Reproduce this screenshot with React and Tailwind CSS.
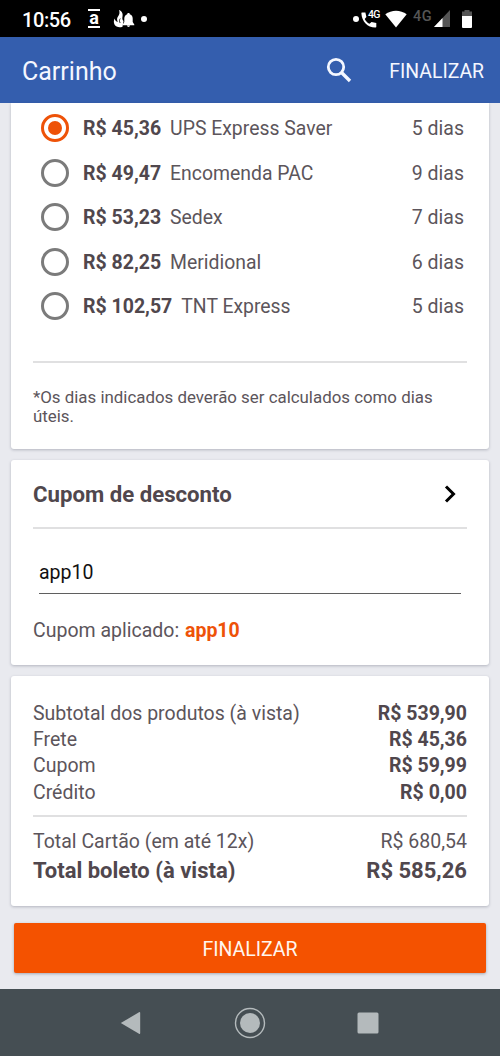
import React from "react";

const shipping = [
  { price: "R$ 45,36", name: "UPS Express Saver", days: "5 dias", selected: true },
  { price: "R$ 49,47", name: "Encomenda PAC", days: "9 dias" },
  { price: "R$ 53,23", name: "Sedex", days: "7 dias" },
  { price: "R$ 82,25", name: "Meridional", days: "6 dias" },
  { price: "R$ 102,57", name: "TNT Express", days: "5 dias" },
];

const totals = [
  ["Subtotal dos produtos (à vista)", "R$ 539,90"],
  ["Frete", "R$ 45,36"],
  ["Cupom", "R$ 59,99"],
  ["Crédito", "R$ 0,00"],
];

function StatusBar() {
  return (
    <header className="flex h-[37px] shrink-0 items-center bg-black pr-[28px] pl-[22px] text-white">
      <span className="w-[50px] pt-[2px] text-[20px] leading-none font-medium tracking-[-0.400px] whitespace-nowrap">10:56</span>
      <div className="ml-[16px] flex h-[19px] w-[12px] flex-col items-center justify-center border-y-2 border-white">
        <span className="pb-px text-[18px] leading-[12px] font-bold">a</span>
      </div>
      <svg className="ml-[13px]" width="22" height="20" viewBox="0 0 22 20" fill="#fff">
        <path d="M6 1C9.500 2.500 10 5 9.500 7.500C9 9.500 9.500 11 10.500 12L9.500 17.800C6 19 3 18 1.500 15.500C0.600 13.500 0.600 11.500 1.700 9.500C2 11.500 3 12.500 4.800 13C3.800 11 3.800 9 5 7.500C6.500 5.500 7 3.500 6 1Z" />
        <path d="M7.300 9.500C6.200 10.800 6.200 12.500 7.200 14" fill="none" stroke="#000" strokeWidth="0.800" />
        <path d="M15.500 4C16.300 4 16.800 4.500 16.800 5.200C19 5.900 19.700 7.500 19.700 9.500V13L21.300 15.500V16.200H9.700V15.500L11.300 13V9.500C11.300 7.500 12.200 5.900 14.200 5.200C14.200 4.500 14.800 4 15.500 4ZM14 16.600H17C17 18.500 14 18.500 14 16.600Z" />
      </svg>
      <span className="ml-[6px] size-[6px] rounded-full bg-white" />
      <div className="ml-auto flex items-center">
        <span className="size-[6px] rounded-full bg-white" />
        <div className="relative ml-[2px] h-[20px] w-[20px]">
          <svg width="17" height="20" viewBox="0 0 17 20" fill="#fff">
            <path d="M1 3.500H4.400L5.400 8L3.700 10C4.800 12.200 6.300 13.700 8.500 14.800L10.500 12.900L15.300 14V17.700C15.300 18.300 14.800 18.500 14.200 18.500C6.500 18.500 0.900 12.500 0.400 4.500C0.300 3.800 0.500 3.500 1 3.500Z" />
          </svg>
          <span className="absolute top-[1px] left-[7px] text-[10.500px] leading-[10px] font-medium tracking-[-0.900px]">4G</span>
        </div>
        <svg className="ml-[4px]" width="22" height="18" viewBox="0 0 22 18" fill="#fff">
          <path d="M0.300 4.300C6.500 -0.600 15.500 -0.600 21.700 4.300L11 17.500Z" />
        </svg>
        <span className="relative top-[-2px] ml-[6px] text-[14.500px] leading-[14px] font-medium tracking-[0.400px] text-[#555]">4G</span>
        <svg className="ml-[2px]" width="16" height="17" viewBox="0 0 16 17">
          <path d="M16 0V17H0Z" fill="#555" />
          <path d="M8.500 8V17H0Z" fill="#fff" />
        </svg>
        <svg className="ml-[12px]" width="10" height="18" viewBox="0 0 10 18">
          <path d="M2.500 0H7.500V1.500H10V6H0V1.500H2.500Z" fill="#555" />
          <path d="M0 6H10V17A1 1 0 0 1 9 18H1A1 1 0 0 1 0 17Z" fill="#fff" />
        </svg>
      </div>
    </header>
  );
}

function AppBar() {
  return (
    <div className="flex h-[66px] shrink-0 items-center bg-[#345eae] pr-[16px] pl-[22px] text-[#f4f7ff]">
      <h1 className="pt-[2px] text-[25px] leading-none">Carrinho</h1>
      <svg className="ml-auto" width="26" height="26" viewBox="0 0 26 26" fill="none" stroke="#f4f7ff">
        <circle cx="10" cy="10" r="7.700" strokeWidth="2.800" />
        <path d="M15.500 15.500L24 24" strokeWidth="3.400" />
      </svg>
      <button className="ml-[37px] pt-[3px] text-[19.400px] leading-none">FINALIZAR</button>
    </div>
  );
}

function Radio({ selected }) {
  return selected ? (
    <span className="flex size-[28px] shrink-0 items-center justify-center rounded-full border-[3px] border-[#ee5208]">
      <span className="size-[14px] rounded-full bg-[#ee5208]" />
    </span>
  ) : (
    <span className="size-[28px] shrink-0 rounded-full border-[3px] border-[#7b7b7b]" />
  );
}

const card = "bg-white shadow-[0_1px_3px_rgba(40,45,70,0.28)] px-[22px]";

export default function App() {
  return (
    <div className="flex h-[1056px] w-[500px] flex-col overflow-hidden bg-[#e9eaef] text-[19.500px] text-[#5c555b]" style={{ fontFamily: 'Roboto, "Liberation Sans", sans-serif' }}>
      <StatusBar />
      <AppBar />
      <main className="flex h-[886px] shrink-0 flex-col px-[11px]">
        <section className={card + " h-[346px] shrink-0 rounded-b-[3px] pt-[3px]"}>
          {shipping.map((s) => (
            <label key={s.price} className="flex h-[44.500px] items-center pr-[3px] pl-[8px]">
              <Radio selected={s.selected} />
              <b className="ml-[14px] pt-px font-bold text-[#50474d]">{s.price}</b>
              <span className="ml-[9px] pt-px text-[19.400px]">{s.name}</span>
              <span className="ml-auto pt-px">{s.days}</span>
            </label>
          ))}
          <hr className="mt-[32px] border-t-2 border-[#e0e0e1]" />
          <p className="mt-[25px] text-[16.880px] leading-[19.500px]">
            *Os dias indicados deverão ser calculados como dias<br />úteis.
          </p>
        </section>

        <section className={card + " mt-[11px] h-[205px] shrink-0 rounded-[3px]"}>
          <div className="flex h-[67px] items-center justify-between pr-[11px]">
            <h2 className="pt-[2px] text-[22.200px] font-bold text-[#50474d]">Cupom de desconto</h2>
            <svg width="12" height="18" viewBox="0 0 12 18" fill="none" stroke="#000" strokeWidth="3">
              <path d="M2 1.500L9.500 9L2 16.500" />
            </svg>
          </div>
          <hr className="border-t-2 border-[#e0e0e1]" />
          <div className="mx-[6px] flex h-[65px] items-end border-b border-[#5f5f5f] pb-[9px] leading-[22px] text-[#111]">app10</div>
          <p className="mt-[25px] leading-[24px]">
            Cupom aplicado: <b className="ml-px font-bold text-[#ee5208]">app10</b>
          </p>
        </section>

        <section className={card + " mt-[11px] h-[230px] shrink-0 rounded-[3px] pt-[24px]"}>
          {totals.map(([label, value]) => (
            <div key={label} className="flex h-[26.400px] items-center justify-between">
              <span>{label}</span>
              <b className="font-bold text-[#50474d]">{value}</b>
            </div>
          ))}
          <hr className="mt-[9px] border-t-2 border-[#e0e0e1]" />
          <div className="mt-[12px] flex h-[27px] items-center justify-between">
            <span>Total Cartão (em até 12x)</span>
            <span>R$ 680,54</span>
          </div>
          <div className="flex h-[30px] items-center justify-between text-[22px] font-bold text-[#50474d]">
            <span>Total boleto (à vista)</span>
            <span>R$ 585,26</span>
          </div>
        </section>

        <button className="mx-[3px] mt-[17px] h-[50px] shrink-0 rounded-[2px] bg-[#f45200] pt-[3px] text-[19.500px] text-[#fff6ee] shadow-[0_1px_3px_rgba(40,45,70,0.35)]">FINALIZAR</button>
      </main>
      <nav className="flex h-[67px] shrink-0 items-center justify-center bg-[#454e53]">
        <svg width="260" height="34" viewBox="0 0 260 34" fill="#b4babc">
          <path d="M0.800 17L19 6.300Q20.200 5.600 20.200 7V27Q20.200 28.400 19 27.700Z" />
          <circle cx="130" cy="17" r="14.500" fill="none" stroke="#b4babc" strokeWidth="1.400" />
          <circle cx="130" cy="17" r="10" />
          <rect x="237.500" y="6.500" width="21" height="21" rx="1.500" />
        </svg>
      </nav>
    </div>
  );
}
